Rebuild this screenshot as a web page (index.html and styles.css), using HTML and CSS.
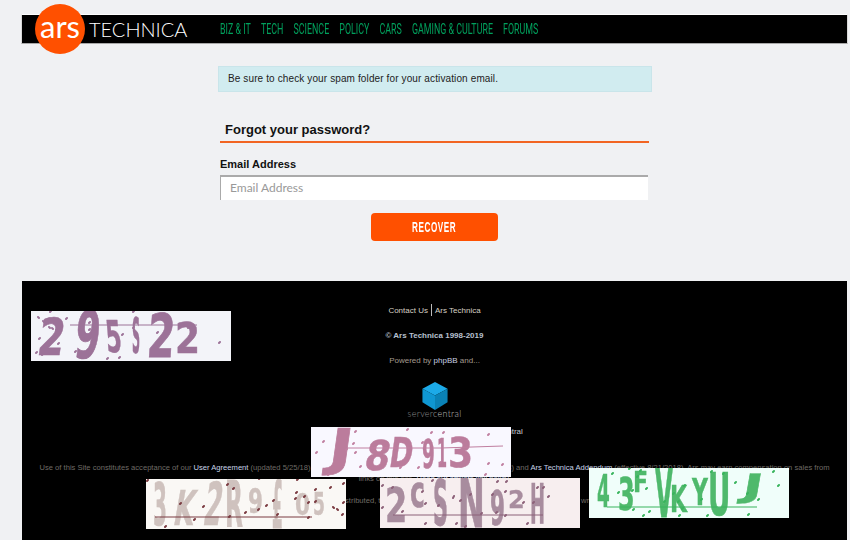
FILE: index.html
```html
<!DOCTYPE html>
<html lang="en">
<head>
<meta charset="utf-8">
<title>Ars Technica - Forgot your password?</title>
<link rel="stylesheet" href="styles.css">
</head>
<body>
<div class="page">
  <header class="topbar">
    <a class="logo" href="#"><span class="logo-circle">ars</span><span class="logo-word">TECHNICA</span></a>
    <nav class="nav">
      <a href="#">BIZ &amp; IT</a><a href="#">TECH</a><a href="#">SCIENCE</a><a href="#">POLICY</a><a href="#">CARS</a><a href="#">GAMING &amp; CULTURE</a><a href="#">FORUMS</a>
    </nav>
  </header>

  <main class="main">
    <p class="alert">Be sure to check your spam folder for your activation email.</p>
    <form class="form">
      <h2 class="form-title">Forgot your password?</h2>
      <label class="label" for="email">Email Address</label>
      <input class="input" id="email" type="text" placeholder="Email Address">
      <div class="actions"><button class="button" type="button"><span class="button-text">RECOVER</span></button></div>
    </form>
  </main>

  <footer class="footer">
    <p class="f-contact"><a href="#">Contact Us</a><span class="sep"></span><a href="#">Ars Technica</a></p>
    <p class="f-copy">© Ars Technica 1998-2019</p>
    <p class="f-power">Powered by <a href="#">phpBB</a> and...</p>
    <div class="sc-logo">
      <svg class="cube" width="26" height="28" viewBox="0 0 26 29">
        <polygon class="cube-top" points="13,0 26,7 13,14 0,7"/>
        <polygon class="cube-left" points="0,7 13,14 13,29 0,21"/>
        <polygon class="cube-right" points="26,7 13,14 13,29 26,21"/>
      </svg>
      <div class="sc-word"><span class="sc-dim">server</span>central</div>
    </div>
    <p class="f-host">Hosting and bandwidth provided by <a href="#">ServerCentral</a></p>
    <div class="f-legal">
      <p>Use of this Site constitutes acceptance of our <a href="#">User Agreement</a> (updated 5/25/18) and <a href="#">Privacy Policy and Cookie Statement</a> (updated 5/25/18) and <a href="#">Ars Technica Addendum</a> (effective 8/21/2018). Ars may earn compensation on sales from</p>
      <p>links on this site. <a href="#">Read our affiliate link policy.</a></p>
      <p><a href="#">Your California Privacy Rights</a></p>
      <p>The material on this site may not be reproduced, distributed, transmitted, cached or otherwise used, except with the prior written permission of Condé Nast.</p>
    </div>
  </footer>

  <svg class="captcha c1" width="200" height="50" viewBox="0 0 200 50">
    <rect class="cap-bg" width="200" height="50"/>
    <g class="cap-glyphs">
      <text transform="translate(5,44) skewX(-8) scale(.96,1.28)">2</text>
      <text transform="translate(42,47) skewX(-6) scale(.9,1.65)">9</text>
      <text transform="translate(76,41) skewX(5) scale(.57,1.1)">5</text>
      <text transform="translate(101,42) scale(.28,1.24)">S</text>
      <text transform="translate(115,46) skewX(-4) scale(1,1.5)">2</text>
      <text transform="translate(144,42) scale(.9,1.07)">2</text>
    </g>
    <path class="cap-line" d="M39 14H166"/>
    <path class="cap-dots" d="M7 6l1 1M12 10l1 1M19 1l1-1M18 16l1 1M21 17l1 1M25 19l1 1M35 8l1-1M8 28l1-1M27 33l1-1M5 42l1-1M11 44l1-1M44 41l1-1M58 44l1-1M52 28l1-1M58 19l1-1M64 11l1-1M64 6l1-1M58 12l1-1M102 1l1-1M91 24l1-1M102 17l1-1M126 22l1-1M157 17l1-1M157 31l1-1M188 32l1-1M76 48l1-1M88 47l1-1"/>
  </svg>

  <svg class="captcha c2" width="200" height="50" viewBox="0 0 200 50">
    <rect class="cap-bg" width="200" height="50"/>
    <g class="cap-glyphs">
      <text transform="translate(16,38) skewX(-8) scale(1.6,1.27)">J</text>
      <text transform="translate(52,43) skewX(-10) scale(.9,1.03)">8</text>
      <text transform="translate(77,40) skewX(-8) scale(.7,1.03)">D</text>
      <text transform="translate(111,41) scale(.46,.97)">9</text>
      <text transform="translate(126,40) scale(.36,.97)">1</text>
      <text transform="translate(137,40) scale(.9,1.03)">3</text>
    </g>
    <path class="cap-line" d="M36 21H130L192 19"/>
    <path class="cap-dots" d="M44 5l1-1M12 15l1-1M5 26l1-1M42 17l1-1M35 23l1-1M44 26l1-1M49 40l1-1M17 48l1-1M96 3l1-1M120 6l1-1M132 6l1-1M111 16l1-1M177 8l1-1M89 41l1-1M107 41l1-1M129 36l1-1M177 37l1-1M191 38l1-1M174 48l1-1"/>
  </svg>

  <svg class="captcha c3" width="200" height="50" viewBox="0 0 200 50">
    <rect class="cap-bg" width="200" height="50"/>
    <g class="cap-glyphs">
      <text transform="translate(7,46) scale(.5,1.48)">3</text>
      <text transform="translate(26,46) skewX(-10) scale(.65,1.2)">K</text>
      <text transform="translate(56,46) skewX(-8) scale(.64,1.48)">2</text>
      <text transform="translate(79,48) scale(.58,1.62)">R</text>
      <text transform="translate(102,34) scale(.54,.86)">9</text>
      <text transform="translate(126,49) scale(.39,1.65)">£</text>
      <text transform="translate(149,36) scale(.54,.76)">0</text>
      <text transform="translate(167,36) scale(.43,.8)">5</text>
    </g>
    <path class="cap-line" d="M9 38H166"/>
    <path class="cap-dots" d="M1 2l1-1M34 25l1-1M57 28l1-1M48 41l1-1M19 48l1-1M81 6l1-1M87 10l1-1M83 38l1-1M99 34l1-1M112 31l1-1M120 27l1-1M127 22l1-1M131 36l1-1M113 0l1-1M151 1l1-1M150 14l1-1M149 20l1-1M158 18l1-1M169 11l1-1M162 24l1-1M169 23l1-1M162 39l1-1M184 9l1-1M197 5l1-1M187 28l1 1M191 30l1 1M197 24l1-1M196 36l1-1"/>
  </svg>

  <svg class="captcha c4" width="200" height="50" viewBox="0 0 200 50">
    <rect class="cap-bg" width="200" height="50"/>
    <g class="cap-glyphs">
      <text transform="translate(5,44) scale(.8,1.2)">2</text>
      <text transform="translate(30,29) scale(.63,1.09)">c</text>
      <text transform="translate(53,47) scale(.52,1.55)">S</text>
      <text transform="translate(78,49) scale(.8,1.69)">N</text>
      <text transform="translate(110,47) scale(.54,1.2)">9</text>
      <text transform="translate(128,30) scale(.6,.62)">2</text>
      <text transform="translate(150,45) scale(.45,1.38)">H</text>
    </g>
    <path class="cap-line" d="M13 37H163"/>
    <path class="cap-dots" d="M2 8l1-1M12 10l1-1M22 34l1-1M2 30l1-1M52 3l1-1M42 14l1-1M45 26l1-1M58 28l1-1M45 46l1-1M76 46l1-1M85 49l1-1M73 20l1-2M80 23l1-1M90 17l1-1M101 36l1-1M112 17l1-1M116 35l1-1M125 38l1-1M117 4l1-1M126 4l1-1M125 14l1-1M143 25l1-1M153 25l1-1M157 10l1-1M163 10l1-1M168 19l1-1M147 46l1-1"/>
  </svg>

  <svg class="captcha c5" width="200" height="50" viewBox="0 0 200 50">
    <rect class="cap-bg" width="200" height="50"/>
    <g class="cap-glyphs">
      <text transform="translate(8,39) scale(.46,1.1)">4</text>
      <text transform="translate(29,42) scale(.6,1.1)">3</text>
      <text transform="translate(44,24) scale(.55,.69)">F</text>
      <text transform="translate(66,49) scale(.58,1.69)">V</text>
      <text transform="translate(81,44) scale(.55,.93)">K</text>
      <text transform="translate(103,37) scale(.55,.93)">Y</text>
      <text transform="translate(119,47) scale(.69,1.48)">U</text>
      <text transform="translate(152,29) skewX(-10) scale(1.37,.81)">J</text>
    </g>
    <path class="cap-line" d="M18 39H168"/>
    <path class="cap-dots" d="M23 6l1-1M40 1l1-1M51 3l1-1M48 9l1-1M29 25l1-1M43 23l1-1M57 21l1-1M44 42l1-1M54 48l1-1M60 44l1-1M75 34l1-1M84 26l1-1M95 18l1-1M89 34l1-1M93 41l1-1M90 48l1-1M112 32l1-1M118 48l1-1M122 4l1-1M134 6l1-1M146 15l1-1M158 26l1-1M169 32l1-1M159 47l1-1M184 4l1-1M189 18l1-1"/>
  </svg>
</div>
</body>
</html>
```
FILE: styles.css
```css
* { box-sizing: border-box; }
html, body { margin: 0; padding: 0; height: 540px; overflow: hidden; }
body { background: #f0f1f3; font-family: "Liberation Sans", Arial, sans-serif; color: #111; }
p { margin: 0; }
a { color: inherit; text-decoration: none; }

.page { position: relative; height: 540px; padding: 14px 3px 0 22px; overflow: hidden; display: flex; flex-direction: column; }

.topbar { height: 30px; margin: 0 -1px; background: #000; border: 1px solid #d8d8d8; border-top-color: #fff; border-bottom-color: #a8a8a8; display: flex; align-items: center; flex: none; }
.logo { display: flex; align-items: center; margin-left: 13px; width: 185px; flex: none; }
.logo-circle { width: 50px; height: 50px; border-radius: 50%; background: #ff5000; color: #fff; font: 400 31px/44px Lato, sans-serif; text-align: center; flex: none; z-index: 1; }
.logo-word { color: #fff; font: 300 20px/1 Lato, sans-serif; margin-left: 4px; }
.nav { display: flex; gap: 16px; flex: none; font: 400 14px/1 Roboto, sans-serif; color: #00a05c; transform: scaleX(.634); transform-origin: left center; }

.main { width: 434px; margin: 22px 0 0 196px; flex: none; }
.alert { height: 26px; background: #d1ecf0; border: 1px solid #c9e5ea; padding: 0 9px; font-size: 10px; line-height: 24px; letter-spacing: .12px; color: #222; }
.form { margin: 22px 3px 0 2px; }
.form-title { margin: 0; height: 29px; padding: 2px 0 0 5px; font-size: 13px; line-height: 28px; font-weight: 700; border-bottom: 2px solid #f26522; color: #111; }
.label { display: block; margin-top: 15px; font-size: 11px; line-height: 13px; font-weight: 700; color: #111; }
.input { display: block; width: 428px; height: 25px; margin-top: 4px; padding: 0 9px 2px; border: 0; border-top: 2px solid #aaa; border-left: 1px solid #aaa; background: #fff; font: 12px Lato, sans-serif; outline: 0; }
.input::placeholder { color: #999; opacity: 1; }
.actions { display: flex; justify-content: center; margin: 13px 1px 0 0; }
.button { width: 127px; height: 28px; background: #ff5000; border: 0; border-radius: 4px; color: #fff; padding: 0; display: flex; align-items: center; justify-content: center; }
.button-text { display: block; font: 700 14px/1 "Liberation Sans", sans-serif; letter-spacing: 1px; transform: scaleX(.58); }

.footer { margin-top: 40px; flex: 1 0 auto; background: #000; color: #6f6b66; font-size: 8px; text-align: center; padding-top: 23px; }
.f-contact { color: #d6d0c4; line-height: 11px; display: flex; justify-content: center; align-items: center; }
.sep { width: 1px; height: 12px; background: #bbb; margin: 0 3px; }
.f-copy { margin-top: 14px; line-height: 11px; font-weight: 700; color: #b8c0d0; }
.f-power { margin-top: 14px; line-height: 11px; color: #a39a8e; }
.f-power a { color: #c8d0e0; }
.sc-logo { margin-top: 16px; display: flex; flex-direction: column; align-items: center; }
.cube { display: block; }
.cube-top { fill: #1caae8; }
.cube-left { fill: #0f97d2; }
.cube-right { fill: #0a82b6; }
.sc-word { margin-top: -2px; font: 300 9px/11px Lato, sans-serif; letter-spacing: .3px; color: #bbb; }
.sc-dim { color: #888; }
.f-host { margin-top: 7px; line-height: 11px; color: #c8ccd4; }
.f-legal { margin-top: 25px; line-height: 11px; font-size: 7.6px; }
.f-legal a { color: #c8d4e8; }

.captcha { position: absolute; display: block; overflow: hidden; }
.c1 { left: 31px; top: 311px; color: #9c7298; --bg: #f3f4f9; --mark: #9c7298; }
.c2 { left: 311px; top: 427px; color: #bb7c9c; --bg: #f9f8ff; --mark: #c07fa0; }
.c3 { left: 146px; top: 479px; color: #cfc2be; --bg: #faf8f5; --mark: #7a3a40; }
.c4 { left: 380px; top: 478px; color: #a88c9e; --bg: #f7eeef; --mark: #8c6078; }
.c5 { left: 589px; top: 468px; color: #4fb96c; --bg: #f0fefa; --mark: #38b45c; }
.cap-bg { fill: var(--bg); }
.cap-glyphs { font: 700 40px "DejaVu Sans", sans-serif; fill: currentColor; stroke: currentColor; stroke-width: .5px; filter: blur(.7px); }
.cap-line { fill: none; stroke: var(--mark); stroke-width: 1px; }
.cap-dots { fill: none; stroke: var(--mark); stroke-width: 2px; stroke-linecap: round; }
```
